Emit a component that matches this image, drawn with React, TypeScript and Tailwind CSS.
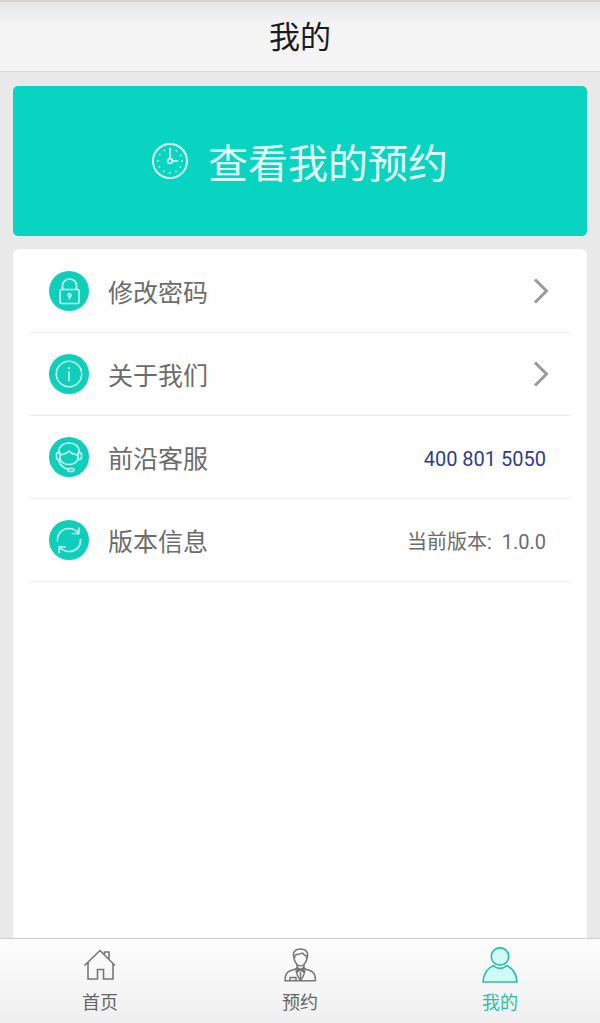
import { ReactNode } from "react";

const font = "font-[Roboto,'Noto_Sans_CJK_SC',sans-serif]";

function ClockIcon() {
  return (
    <svg
      viewBox="0 0 36 36"
      className="size-9"
      fill="none"
      stroke="#d9fffa"
      strokeLinecap="round"
      aria-hidden="true"
    >
      <circle cx="18" cy="18" r="17" strokeWidth="2" />
      <circle
        cx="18"
        cy="18"
        r="12"
        strokeWidth="1.8"
        strokeDasharray="0.1 6.183"
        opacity="0.8"
      />
      <circle cx="18" cy="18" r="2.4" strokeWidth="1.7" />
      <path d="M18 5.5v10M20.5 18h5" strokeWidth="1.7" />
    </svg>
  );
}

function RoundIcon({ children }: { children: ReactNode }) {
  return (
    <svg
      viewBox="0 0 40 40"
      className="size-10 shrink-0"
      fill="none"
      stroke="#c8fff6"
      strokeWidth="1.6"
      strokeLinecap="round"
      strokeLinejoin="round"
      aria-hidden="true"
    >
      <circle cx="20" cy="20" r="20" fill="#0fcfbb" stroke="none" />
      {children}
    </svg>
  );
}

function LockIcon() {
  return (
    <RoundIcon>
      <rect x="11" y="18.5" width="19" height="14" rx="1.5" />
      <path d="M13.5 18.500v-4a7 6.500 0 0 1 14 0v4" />
      <circle cx="20.5" cy="24.2" r="1.5" />
      <path d="M20.5 25.5v2.2" />
    </RoundIcon>
  );
}

function InfoIcon() {
  return (
    <RoundIcon>
      <circle cx="20" cy="20" r="12.7" />
      <path d="M20 18v8.500" />
      <circle cx="20" cy="14.2" r="1.1" fill="#c8fff6" stroke="none" />
    </RoundIcon>
  );
}

function ServiceIcon() {
  return (
    <RoundIcon>
      <path d="M9.5 15.500C10 9.500 14 6 20 6s10 3.500 10.500 9.500" />
      <path d="M11 15.500H9.500Q7.500 15.500 7.500 17.500v3q0 2 2 2H11zM29 15.500h1.500q2 0 2 2v3q0 2-2 2H29z" />
      <path d="M11 18c3.500-.3 6.500-1.500 9-4 2.500 2.500 5.500 3.700 9 4" />
      <path d="M11 22c1.500 3.500 5 5.500 9 5.500s7.500-2 9-5.500" />
      <path d="M9.500 23c1 4.500 3.500 7.500 10 9.500" />
      <rect x="19" y="31.500" width="6" height="3" rx="1.500" />
    </RoundIcon>
  );
}

function RefreshIcon() {
  return (
    <RoundIcon>
      <path d="M8.500 21C8 14 13 8.500 20 8.500c3.800 0 7 1.500 9.300 4.500M29.800 8v5.800l-6.300-.3" />
      <path d="M31.500 19.500C32 26.500 27 31.500 20 31.500c-3.800 0-7-1.500-9.300-4.200M10.200 32.500v-6l5.800.5" />
    </RoundIcon>
  );
}

function ChevronIcon() {
  return (
    <svg
      viewBox="0 0 16 26"
      className="mr-[22px] h-[26px] w-4"
      fill="none"
      stroke="#9a9a9a"
      strokeWidth="3"
      aria-hidden="true"
    >
      <path d="M2 1.500 13.500 13 2 24.500" />
    </svg>
  );
}

function HomeIcon() {
  return (
    <svg
      viewBox="0 0 36 36"
      className="size-9"
      fill="none"
      stroke="#777"
      strokeWidth="1.6"
      aria-hidden="true"
    >
      <path d="M2.500 18.500 18 3.500l15 15M6 15.500V32h9.500v-9.500h6V32H31V16.500M22.500 8V5H27v7.500" />
    </svg>
  );
}

function DoctorIcon() {
  return (
    <svg
      viewBox="0 0 36 36"
      className="size-9"
      fill="none"
      stroke="#777"
      strokeWidth="1.5"
      strokeLinejoin="round"
      aria-hidden="true"
    >
      <path d="M12 11.500C10 5.500 13 2 18.500 2S27 5.500 25 11.500" />
      <path d="M12.500 11.500c0-2 .5-3 1.500-4 3-.5 5-.5 6.500-1.500 1 1.500 2.500 2.500 3.500 2.500.5 1 .5 2 .5 3" />
      <path d="M12 11.500c.5 2.500 1.500 4.500 3 6 2 1.800 5 1.800 7 0 1.500-1.500 2.500-3.500 3-6" />
      <path d="M15 17.500v4L7.500 24C4 25.500 3 28.500 3 33.700h30.500c0-5.200-1-8.200-4.500-9.700l-7-2.500v-4" />
      <path d="m15.500 20.500 3 2 3-2v4.500l-3-2-3 2z" fill="#777" />
      <path d="M14 22.500c.5 4 2 8 4.500 11 2.500-3 4-7 4.500-11M18.500 25v7M8 33.500v-3h6v3" />
    </svg>
  );
}

function UserIcon() {
  return (
    <svg
      viewBox="0 0 36 36"
      className="size-9"
      fill="#d0fbf4"
      stroke="#2bbfac"
      strokeWidth="1.7"
      strokeLinejoin="round"
      aria-hidden="true"
    >
      <path d="M11.500 18.500C4.500 21.500 1.500 27.500 1 35h34c-.5-7.500-3.500-13.500-10.500-16.500-3.500 3.800-9.500 3.800-13 0z" />
      <circle cx="18" cy="9.500" r="8.700" />
    </svg>
  );
}

const rowClass =
  "flex h-[83px] w-full items-center gap-[19px] border-b border-[#ededed] pl-5 text-left text-[25px] leading-8 text-[#6c6c6c]";

const tabs = [
  { label: "首页", icon: <HomeIcon />, active: false },
  { label: "预约", icon: <DoctorIcon />, active: false },
  { label: "我的", icon: <UserIcon />, active: true },
];

function App() {
  return (
    <div className={`flex min-h-screen flex-col bg-[#e9e9e9] ${font}`}>
      <header className="flex h-[72px] items-center justify-center border-t-2 border-b border-t-[#d9d4cf] border-b-[#d8d8d8] bg-linear-to-b from-[#e6e6e6] via-[#f3f3f3] via-30% to-[#f5f5f5]">
        <h1 className="pt-0.5 text-[31px] leading-10 text-[#1c1c1c]">我的</h1>
      </header>

      <main className="flex flex-1 flex-col px-[13px] pt-[14px]">
        <button
          type="button"
          className="flex h-[150px] items-center justify-center gap-5 rounded-[5px] bg-[#08d4c1] text-[40px] text-[#e6fffc]"
        >
          <ClockIcon />
          <span className="pt-2">查看我的预约</span>
        </button>

        <ul className="mt-[13px] flex-1 rounded-t-md bg-[#fefefe] px-4 pt-px">
          <li>
            <button type="button" className={rowClass}>
              <LockIcon />
              <span className="flex-1 pt-1.5">修改密码</span>
              <ChevronIcon />
            </button>
          </li>
          <li>
            <button type="button" className={rowClass}>
              <InfoIcon />
              <span className="flex-1 pt-1.5">关于我们</span>
              <ChevronIcon />
            </button>
          </li>
          <li className={rowClass}>
            <ServiceIcon />
            <span className="flex-1 pt-1.5">前沿客服</span>
            <a
              href="tel:4008015050"
              className="mr-[25px] pt-1 text-xl text-[#2f3c8f]"
            >
              400 801 5050
            </a>
          </li>
          <li className={rowClass}>
            <RefreshIcon />
            <span className="flex-1 pt-1.5">版本信息</span>
            <span className="mr-[25px] pt-1 text-xl">
              当前版本:&nbsp; 1.0.0
            </span>
          </li>
        </ul>
      </main>

      <nav className="grid h-[85px] grid-cols-3 border-t border-[#cfcfcf] bg-linear-to-b from-[#fdfdfd] to-[#efefef]">
        {tabs.map((tab) => (
          <a
            key={tab.label}
            href="#"
            aria-current={tab.active ? "page" : undefined}
            className={`flex flex-col items-center gap-1.5 pt-2 text-lg ${
              tab.active ? "text-[#2bbfac]" : "text-[#666]"
            }`}
          >
            {tab.icon}
            {tab.label}
          </a>
        ))}
      </nav>
    </div>
  );
}

export default App;
